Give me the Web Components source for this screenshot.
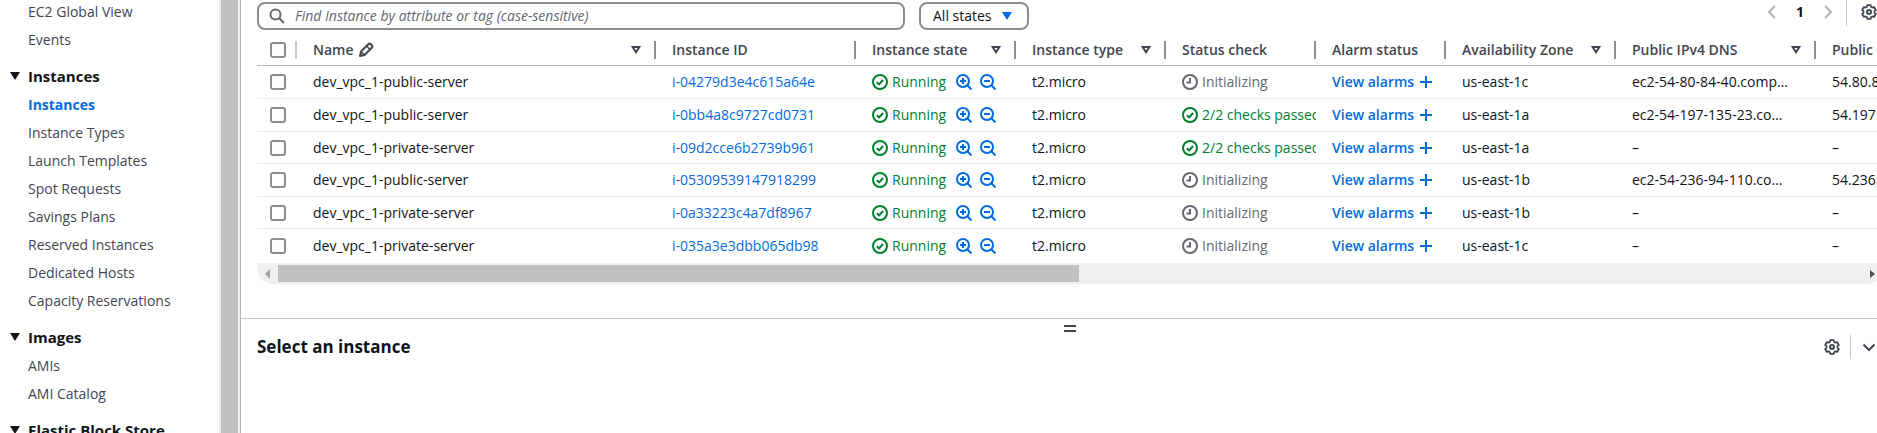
<!DOCTYPE html>
<html lang="en">
<head>
<meta charset="utf-8">
<title>Instances | EC2</title>
<style>
  html, body { height: 100%; margin: 0; overflow: hidden; background: #fff; }
  body { font: 14px/20px "Open Sans", "Noto Sans", sans-serif; color: #0f141a; }
</style>
</head>
<body>
<ec2-console></ec2-console>
<script>
const define = (name, html, setup) => {
  const template = document.createElement('template');
  template.innerHTML = html;
  customElements.define(name, class extends HTMLElement {
    connectedCallback() {
      if (this.shadowRoot) return;
      const root = this.attachShadow({ mode: 'open' });
      root.append(template.content.cloneNode(true));
      if (setup) setup(root, this);
    }
  });
};

/* Six-toothed gear outline, centred in a 16px box. */
const gearPath = () => {
  const points = [];
  for (let tooth = 0; tooth < 6; tooth++) {
    for (const [offset, r] of [[-21, 5.6], [-14, 7.1], [14, 7.1], [21, 5.6]]) {
      const a = (tooth * 60 - 90 + offset) * Math.PI / 180;
      points.push((8 + r * Math.cos(a)).toFixed(2) + ' ' + (8 + r * Math.sin(a)).toFixed(2));
    }
  }
  return 'M' + points.join('L') + 'Z';
};

const icons = {
  search: '<circle cx="6.5" cy="6.5" r="5"/><path d="M10.2 10.2L15 15"/>',
  pencil: '<path stroke-linejoin="round" d="M2 14l1-4.500L10.300 2.200Q11.500 1 12.800 2.200L13.800 3.200Q15 4.500 13.800 5.700L6.500 13z"/><path d="M8.500 4l3.500 3.500M3 9.500l3.500 3.500" stroke-width="1.500"/>',
  check: '<circle cx="8" cy="8" r="7"/><path d="M4.800 8.200l2.300 2.200 4-4.400"/>',
  clock: '<circle cx="8" cy="8" r="7"/><path d="M8 4v4.500H4.500"/>',
  zoomin: '<circle cx="7" cy="7" r="6"/><path d="M11.300 11.300L15.500 15.500M7 4v6M4 7h6"/>',
  zoomout: '<circle cx="7" cy="7" r="6"/><path d="M11.300 11.300L15.500 15.500M4 7h6"/>',
  plus: '<path d="M8 2v12M2 8h12"/>',
  prev: '<path d="M11 2L5 8l6 6"/>',
  next: '<path d="M5 2l6 6-6 6"/>',
  down: '<path d="M2.500 5.500L8 11l5.500-5.500"/>',
  gear: `<path stroke-linejoin="round" stroke-width="1.800" d="${gearPath()}"/><circle cx="8" cy="8" r="2"/>`
};

define('app-icon', `
  <style>
    :host { display: block; flex: none; width: 16px; height: 16px; }
    svg { display: block; width: 100%; height: 100%; fill: none; stroke: currentColor; stroke-width: 2; }
  </style>
  <svg viewBox="0 0 16 16" aria-hidden="true"></svg>`,
  (root, el) => { root.querySelector('svg').innerHTML = icons[el.getAttribute('name')]; });

define('icon-button', `
  <style>
    :host { display: block; flex: none; }
    button { display: block; margin: 0; padding: 0; border: 0; background: none; color: inherit; cursor: pointer; }
  </style>
  <button><slot></slot></button>`,
  (root, el) => root.querySelector('button').setAttribute('aria-label', el.getAttribute('label')));

define('nav-item', `
  <style>
    :host { display: block; height: 28px; padding-left: 28px; color: #424650; }
    :host([current]) { color: #006ce0; font-weight: bold; }
    a { color: inherit; text-decoration: none; line-height: 28px; white-space: nowrap; }
  </style>
  <a href="#"><slot></slot></a>`);

define('nav-group', `
  <style>
    :host { display: block; margin-top: 8px; }
    button { display: flex; align-items: center; gap: 8px; height: 28px; margin-bottom: 1px; padding: 0 0 0 10px; border: 0; background: none;
      font: bold 15px/28px "Open Sans", "Noto Sans", sans-serif; color: #0f141a; white-space: nowrap; }
    svg { width: 10px; height: 8px; }
  </style>
  <button aria-expanded="true"><svg viewBox="0 0 10 8" aria-hidden="true"><path d="M0 0h10L5 8z" fill="currentColor"/></svg><span></span></button>
  <slot></slot>`,
  (root, el) => { root.querySelector('span').textContent = el.getAttribute('heading'); });

define('side-nav', `
  <style>
    :host { display: flex; flex: none; height: 100%; width: 240px; overflow: hidden; border-right: 1px solid #b4b4bb; }
    nav { flex: 1; min-width: 0; margin-top: -2px; }
    .rail { width: 17px; background: #c1c1c1; border: solid #f0f0f0; border-width: 0 2px; }
  </style>
  <nav aria-label="EC2">
    <nav-item>EC2 Global View</nav-item>
    <nav-item>Events</nav-item>
    <nav-group heading="Instances">
      <nav-item current>Instances</nav-item>
      <nav-item>Instance Types</nav-item>
      <nav-item>Launch Templates</nav-item>
      <nav-item>Spot Requests</nav-item>
      <nav-item>Savings Plans</nav-item>
      <nav-item>Reserved Instances</nav-item>
      <nav-item>Dedicated Hosts</nav-item>
      <nav-item>Capacity Reservations</nav-item>
    </nav-group>
    <nav-group heading="Images">
      <nav-item>AMIs</nav-item>
      <nav-item>AMI Catalog</nav-item>
    </nav-group>
    <nav-group heading="Elastic Block Store"></nav-group>
  </nav>
  <div class="rail"></div>`);

define('search-box', `
  <style>
    :host { display: flex; flex: 0 1 648px; box-sizing: border-box; height: 28px; align-items: center; gap: 10px;
      padding: 0 10px; border: 2px solid #8c8c94; border-radius: 8px; color: #656871; }
    input { flex: 1; min-width: 0; padding: 0; border: 0; outline: 0; background: none; font: inherit; color: #0f141a; }
    input::placeholder { color: #656871; font-style: italic; opacity: 1; }
  </style>
  <app-icon name="search"></app-icon>
  <input type="text" aria-label="Find Instance" placeholder="Find Instance by attribute or tag (case-sensitive)">`);

define('state-filter', `
  <style>
    :host { display: grid; flex: none; align-items: center; box-sizing: border-box; width: 110px; height: 28px;
      border: 2px solid #8c8c94; border-radius: 8px; }
    select, svg { grid-area: 1 / 1; }
    select { appearance: none; width: 100%; height: 24px; padding: 0 0 0 12px; border: 0; background: none; font: inherit; color: #0f141a; }
    svg { width: 10px; height: 8px; justify-self: end; margin-right: 15px; color: #006ce0; pointer-events: none; }
  </style>
  <select aria-label="Instance state"><option>All states</option></select>
  <svg viewBox="0 0 10 8" aria-hidden="true"><path d="M0 0h10L5 8z" fill="currentColor"/></svg>`);

define('page-controls', `
  <style>
    :host { display: flex; align-items: center; height: 24px; margin-left: auto; color: #424650; }
    .page { width: 40px; text-align: center; font-weight: bold; color: #0f141a; }
    .off { color: #b4b4bb; }
    .line { align-self: flex-start; width: 1px; height: 26px; margin: 0 14px 0 10px; background: #c6c6cd; }
  </style>
  <icon-button class="off" label="Previous page"><app-icon name="prev"></app-icon></icon-button>
  <span class="page">1</span>
  <icon-button class="off" label="Next page"><app-icon name="next"></app-icon></icon-button>
  <span class="line"></span>
  <icon-button label="Preferences"><app-icon name="gear"></app-icon></icon-button>`);

define('status-label', `
  <style>
    :host { display: flex; align-items: center; gap: 4px; color: #656871; white-space: nowrap; }
    :host([ok]) { color: #00802f; }
  </style>
  <span><slot></slot></span>`,
  (root, el) => {
    const icon = document.createElement('app-icon');
    icon.setAttribute('name', el.hasAttribute('ok') ? 'check' : 'clock');
    root.querySelector('span').before(icon);
  });

define('instance-table', `
  <style>
    :host { display: block; }
    table { width: 100%; table-layout: fixed; border-collapse: separate; border-spacing: 0; }
    .w-check { width: 40px; } .w-name { width: 359px; } .w-xl { width: 200px; } .w-l { width: 170px; }
    .w-m { width: 160px; } .w-s { width: 150px; } .w-xs { width: 130px; }
    th, td { box-sizing: border-box; padding: 0; text-align: left; overflow: hidden; white-space: nowrap; }
    th { height: 36px; border-bottom: 1px solid #b4b4bb; font-weight: 600; color: #424650; }
    .head { display: flex; align-items: center; height: 18px; margin: 11px 0 6px; padding: 0 13px 0 16px; gap: 4px; border-right: 2px solid #8c8c94; }
    .head.first { padding: 0 0 0 13px; border-color: #c6c6cd; }
    .head svg { flex: none; width: 10px; height: 8px; margin-left: auto; }
    td { height: 33px; padding-left: 16px; border-bottom: 1px solid #e9ebed; }
    tr:nth-child(2n+3) td { height: 32px; }
    td.check { padding-left: 13px; }
    tr:last-child td { border-bottom-color: transparent; height: 34px; }
    input { appearance: none; display: block; box-sizing: border-box; width: 16px; height: 16px; margin: 0; border: 2px solid #8c8c94; border-radius: 3px; background: #fff; }
    a { color: #006ce0; text-decoration: none; }
    .state { display: flex; align-items: center; gap: 8px; color: #006ce0; }
    .state status-label { width: 76px; }
    .alarm { display: flex; align-items: center; gap: 4px; font-weight: 600; }
  </style>
  <table>
    <colgroup><col class="w-check"><col class="w-name"><col class="w-xl"><col class="w-m"><col class="w-s"><col class="w-s"><col class="w-xs"><col class="w-l"><col class="w-xl"><col></colgroup>
    <thead><tr></tr></thead>
    <tbody></tbody>
  </table>`,
  root => {
    const sort = '<svg viewBox="0 0 10 8" aria-hidden="true"><path d="M1.700 1h6.600L5 6.300z" fill="none" stroke="currentColor" stroke-width="2"/></svg>';
    const columns = [['Name', 1], ['Instance ID'], ['Instance state', 1], ['Instance type', 1], ['Status check'],
      ['Alarm status'], ['Availability Zone', 1], ['Public IPv4 DNS', 1], ['Public IPv4']];
    root.querySelector('thead tr').innerHTML =
      '<th><div class="head first"><input type="checkbox" aria-label="Select all"></div></th>' +
      columns.map(([label, sortable]) => `<th scope="col"><div class="head">${label}${label === 'Name' ? '<app-icon name="pencil"></app-icon>' : ''}${sortable ? sort : ''}</div></th>`).join('');
    const rows = [
      ['public', 'i-04279d3e4c615a64e', 0, 'c', 'ec2-54-80-84-40.comp…', '54.80.84.40'],
      ['public', 'i-0bb4a8c9727cd0731', 1, 'a', 'ec2-54-197-135-23.co…', '54.197.135.23'],
      ['private', 'i-09d2cce6b2739b961', 1, 'a', '–', '–'],
      ['public', 'i-05309539147918299', 0, 'b', 'ec2-54-236-94-110.co…', '54.236.94.110'],
      ['private', 'i-0a33223c4a7df8967', 0, 'b', '–', '–'],
      ['private', 'i-035a3e3dbb065db98', 0, 'c', '–', '–']
    ];
    root.querySelector('tbody').innerHTML = rows.map(([kind, id, passed, zone, dns, ip]) => `
      <tr>
        <td class="check"><input type="checkbox" aria-label="Select ${id}"></td>
        <td>dev_vpc_1-${kind}-server</td>
        <td><a href="#">${id}</a></td>
        <td><div class="state"><status-label ok>Running</status-label><icon-button label="Filter by running"><app-icon name="zoomin"></app-icon></icon-button><icon-button label="Exclude running"><app-icon name="zoomout"></app-icon></icon-button></div></td>
        <td>t2.micro</td>
        <td>${passed ? '<status-label ok>2/2 checks passed</status-label>' : '<status-label>Initializing</status-label>'}</td>
        <td><a class="alarm" href="#">View alarms<app-icon name="plus"></app-icon></a></td>
        <td>us-east-1${zone}</td>
        <td>${dns}</td>
        <td>${ip}</td>
      </tr>`).join('');
  });

define('scroll-strip', `
  <style>
    :host { display: flex; align-items: center; height: 21px; background: #f0f0f0; border-radius: 0 0 16px 16px; }
    svg { flex: none; width: 5px; height: 10px; }
    .left { margin: 0 8px; color: #a3a3a3; }
    .right { margin: 0 8px 0 5px; color: #505050; }
    .thumb { flex: 102; height: 17px; background: #c1c1c1; }
    .rest { flex: 100; }
  </style>
  <svg class="left" viewBox="0 0 5 10" aria-hidden="true"><path d="M5 0v10L0 5z" fill="currentColor"/></svg>
  <div class="thumb"></div><div class="rest"></div>
  <svg class="right" viewBox="0 0 5 10" aria-hidden="true"><path d="M0 1v8l5-4z" fill="currentColor"/></svg>`);

define('split-panel', `
  <style>
    :host { display: block; padding-left: 16px; border-top: 1px solid #c6c6cd; }
    .grip { display: block; box-sizing: border-box; width: 12px; height: 7px; margin: 6px auto 0; padding: 0; border: solid #424650; border-width: 2px 0; background: none; }
    header { display: flex; align-items: center; height: 24px; margin: 3px 6px 0 0; color: #424650; }
    h2 { flex: 1; margin: 0; font-size: 17px; line-height: 24px; font-weight: bold; color: #0f141a; }
    .line { align-self: stretch; width: 1px; margin: 0 10px; background: #c6c6cd; }
  </style>
  <button class="grip" aria-label="Resize panel"></button>
  <header>
    <h2>Select an instance</h2>
    <icon-button label="Panel preferences"><app-icon name="gear"></app-icon></icon-button>
    <span class="line"></span>
    <icon-button label="Close panel"><app-icon name="down"></app-icon></icon-button>
  </header>`);

define('ec2-console', `
  <style>
    :host { display: flex; height: 100%; overflow: hidden; }
    main { flex: 1; min-width: 0; }
    .tools { display: flex; gap: 14px; height: 30px; padding-left: 16px; }
    .tools search-box, .tools state-filter { margin-top: 2px; }
    .list { margin: 0 -6px 34px 16px; }
    split-panel { margin-right: -6px; }
  </style>
  <side-nav></side-nav>
  <main>
    <div class="tools"><search-box></search-box><state-filter></state-filter><page-controls></page-controls></div>
    <div class="list"><instance-table></instance-table><scroll-strip></scroll-strip></div>
    <split-panel></split-panel>
  </main>`);
</script>
</body>
</html>
